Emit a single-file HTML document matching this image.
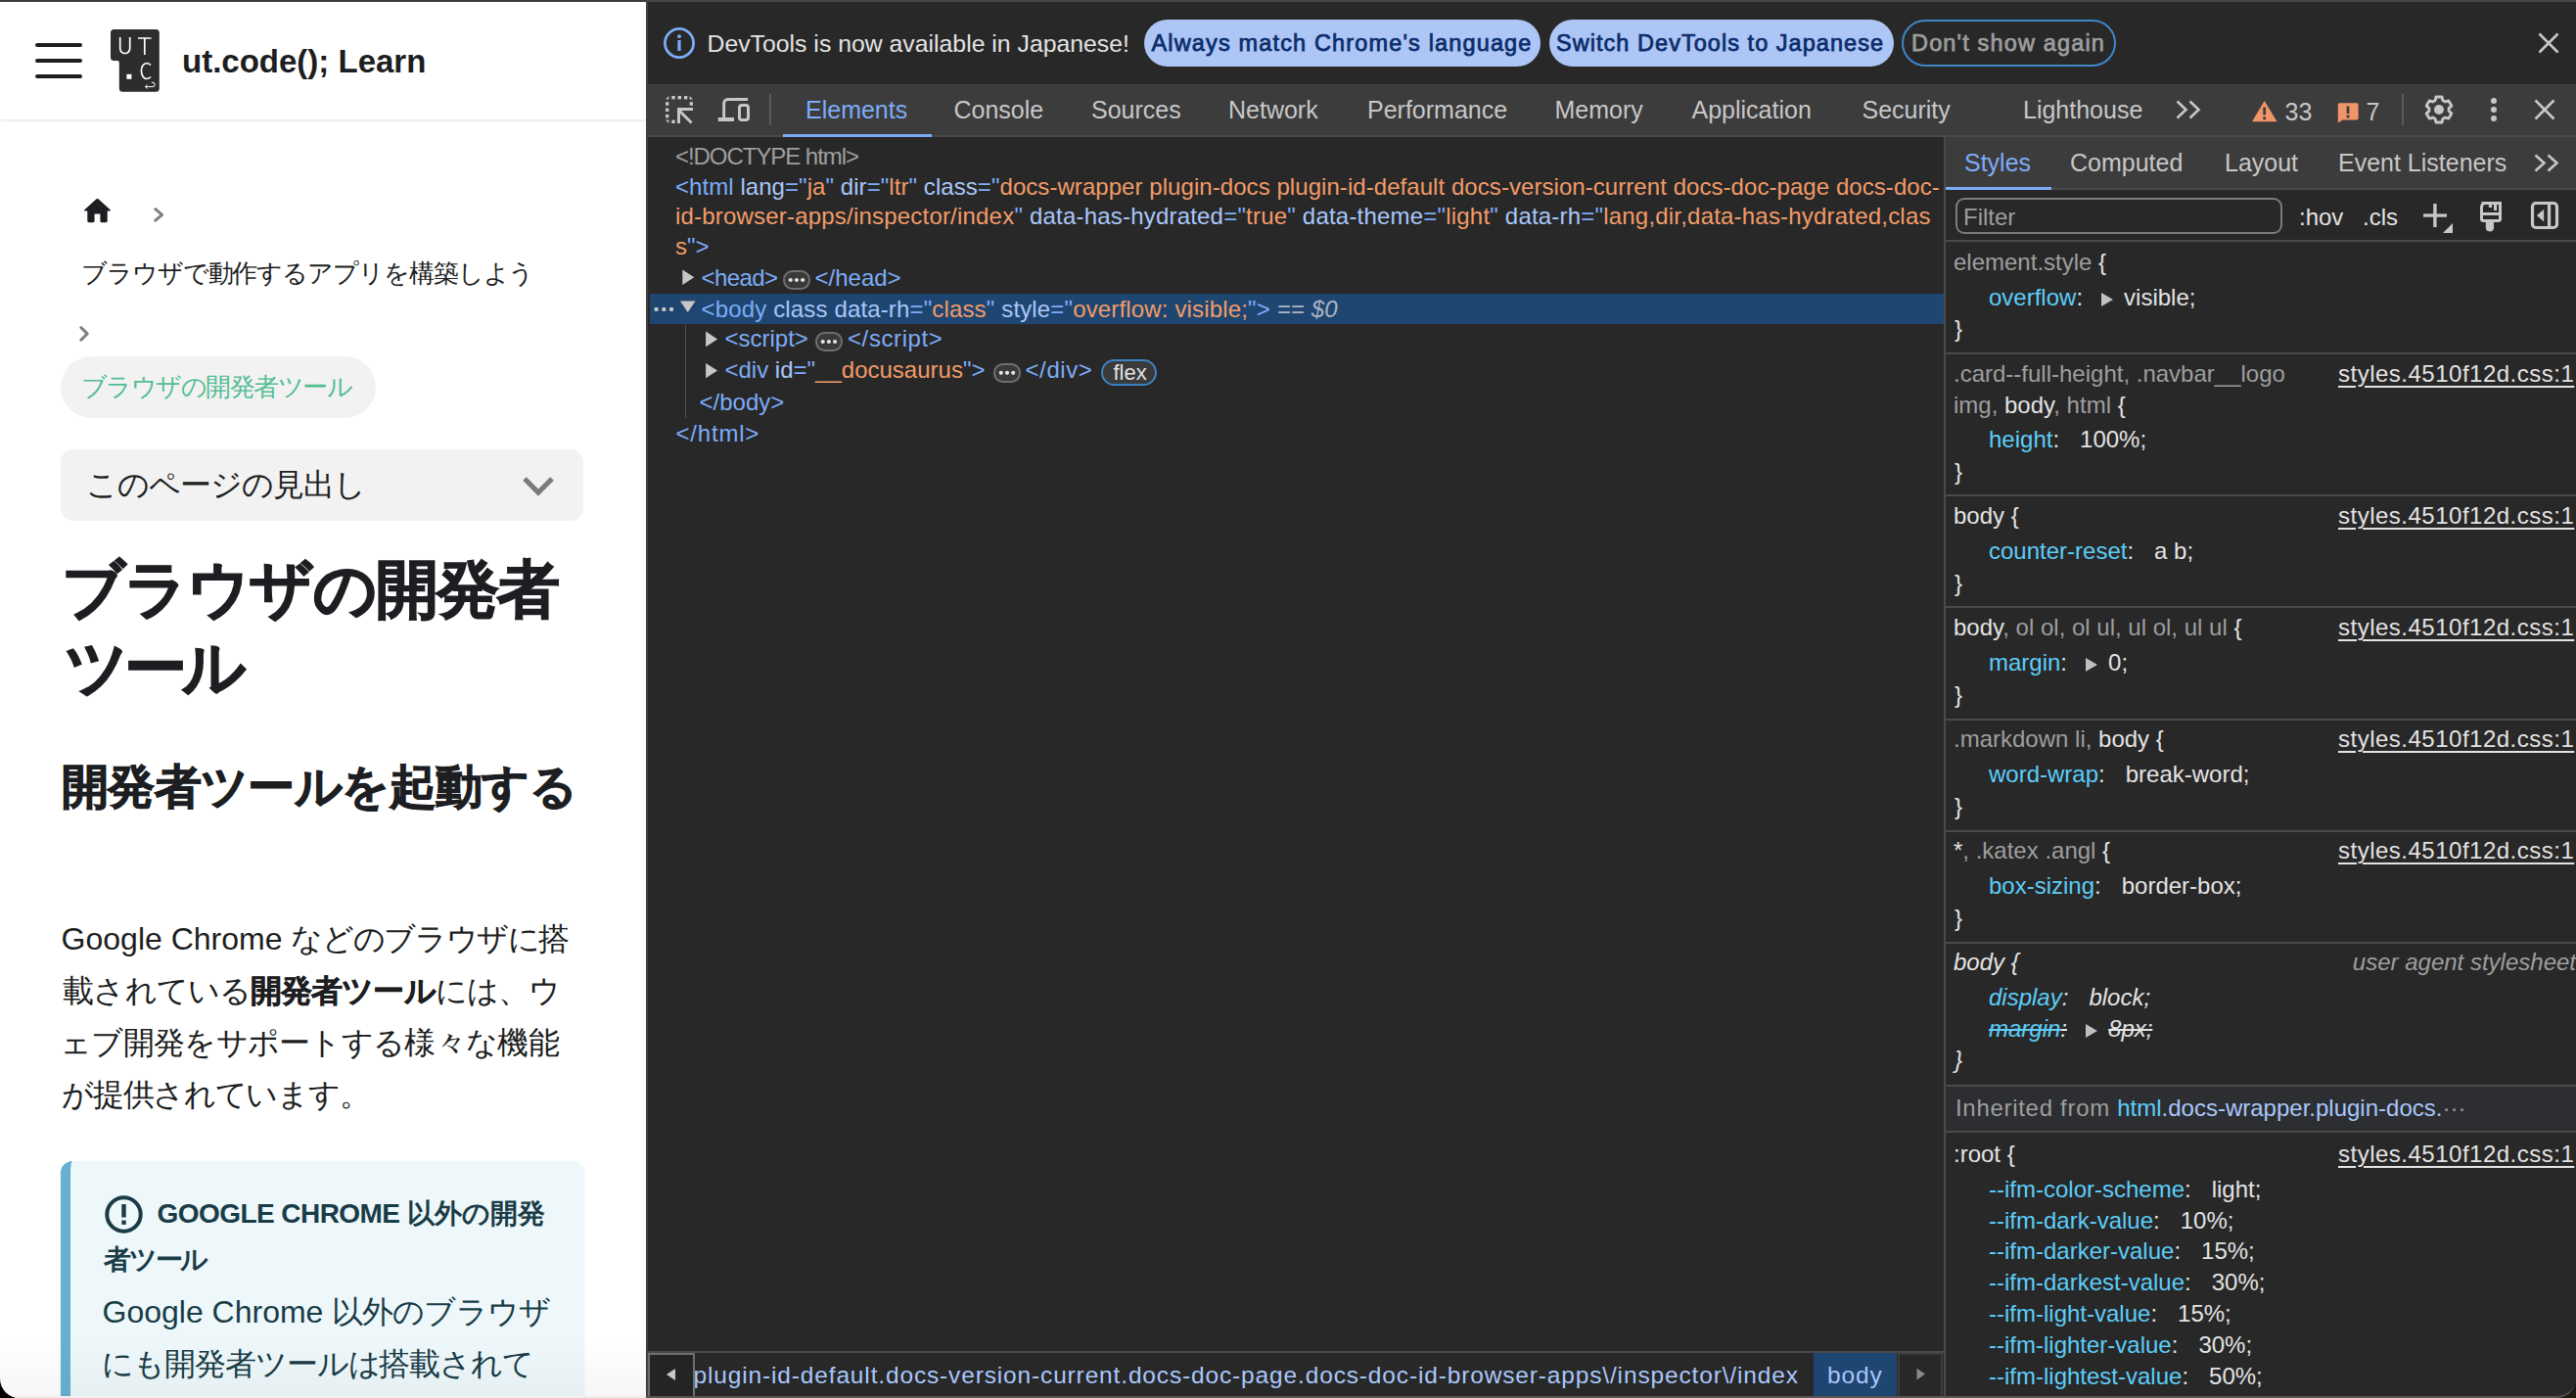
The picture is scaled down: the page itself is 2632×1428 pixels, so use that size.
<!DOCTYPE html><html><head><meta charset="utf-8"><style>
*{box-sizing:border-box;margin:0;padding:0}
html,body{width:2632px;height:1428px;overflow:hidden;background:linear-gradient(to right,#000 50%,#1f1b12 50%)}
body{position:relative;font-family:"Liberation Sans",sans-serif}
#win{position:absolute;left:0;top:0;width:2632px;height:1428px;border-radius:0 0 20px 20px;overflow:hidden;background:#282828}
.t{position:absolute;white-space:nowrap}
.r{position:absolute}
svg{position:absolute;overflow:visible}
.u{text-decoration:underline;text-underline-offset:3px;text-decoration-thickness:2px}
</style></head><body><div id="win">
<div class="r" style="left:0;top:0;width:660px;height:1428px;background:#fff;overflow:hidden">
<div class="r" style="left:0;top:0;width:660px;height:122px;background:#fff;box-shadow:0 1px 3px rgba(0,0,0,.13);z-index:2">
<div class="r" style="left:36px;top:44px;width:48px;height:4px;background:#1c1e21;border-radius:2px"></div>
<div class="r" style="left:36px;top:60px;width:48px;height:4px;background:#1c1e21;border-radius:2px"></div>
<div class="r" style="left:36px;top:76px;width:48px;height:4px;background:#1c1e21;border-radius:2px"></div>
<svg style="left:112px;top:29px" width="53" height="67" viewBox="0 0 53 67">
<path d="M4.5 1H47.3a3.5 3.5 0 0 1 3.5 3.5V61.2a3.5 3.5 0 0 1-3.5 3.5H13.3a3.5 3.5 0 0 1-3.5-3.5V35a2 2 0 0 0-2-2H4.5a3.5 3.5 0 0 1-3.5-3.5V4.5a3.5 3.5 0 0 1 3.5-3.5z" fill="#2d2d2d"/>
<path d="M10.7 9v11.5a5 5 0 0 0 10 0V9" stroke="#fff" stroke-width="1.7" fill="none"/>
<path d="M29 10h13.5M35.8 10v17" stroke="#fff" stroke-width="1.7" fill="none"/>
<path d="M42 37.5a6 6 0 0 0-4-2a5.6 8 0 0 0 0 16a6 6 0 0 0 4-2" stroke="#fff" stroke-width="1.7" fill="none"/>
<rect x="17.4" y="46.8" width="5" height="5" fill="#fff"/>
<path d="M36.5 59.6H44a2.2 2.2 0 0 0 0-4.4H42.8M38.6 57.7L36.5 59.6L38.6 61.5" stroke="#fff" stroke-width="1" fill="none"/>
</svg>
<div class="t " style="left:186.0px;top:46.1px;font-size:33px;line-height:33px;color:#1c1e21;font-weight:700;">ut.code(); Learn</div>
</div>
<svg style="left:81.9px;top:198.1px" width="35" height="35" viewBox="0 0 24 24"><path fill="#1c1e21" d="M10 19v-5h4v5c0 .55.45 1 1 1h3c.55 0 1-.45 1-1v-7h1.7c.46 0 .68-.57.33-.87L12.67 3.6c-.38-.34-.96-.34-1.34 0l-8.36 7.53c-.34.3-.13.87.33.87H5v7c0 .55.45 1 1 1h3c.55 0 1-.45 1-1z"/></svg>
<svg style="left:0;top:0" width="1" height="1"><path d="M158.8 213.6L165.6 219.39999999999998L158.8 225.2" stroke="#808080" stroke-width="3" fill="none" stroke-linecap="round" stroke-linejoin="round"/></svg>
<div class="t" style="left:83.0px;top:267.0px;font-size:25.6px;line-height:25.6px;color:#1c1e21;font-weight:400;letter-spacing:-1.09px">ブラウザで動作するアプリを構築しよう</div>
<svg style="left:0;top:0" width="1" height="1"><path d="M82.8 334.6L89.2 340.9L82.8 347.2" stroke="#808080" stroke-width="3" fill="none" stroke-linecap="round" stroke-linejoin="round"/></svg>
<div class="r" style="left:62px;top:364px;width:322px;height:63px;background:#f2f2f2;border-radius:32px"></div>
<div class="t" style="left:83.0px;top:382.5px;font-size:25.6px;line-height:25.6px;color:#52bd95;font-weight:400;letter-spacing:-1.55px">ブラウザの開発者ツール</div>
<div class="r" style="left:62px;top:459px;width:534px;height:73px;background:#f2f2f2;border-radius:13px"></div>
<div class="t" style="left:88.0px;top:479.0px;font-size:32px;line-height:32px;color:#1c1e21;font-weight:400;letter-spacing:-0.94px">このページの見出し</div>
<svg style="left:0;top:0" width="1" height="1"><path d="M536 489L550 503L564 489" stroke="#7b7b7b" stroke-width="5.2" fill="none" stroke-linejoin="miter"/></svg>
<div class="t" style="left:63.0px;top:562.2px;font-size:64px;line-height:80px;color:#1c1e21;font-weight:700;letter-spacing:-1.86px;-webkit-text-stroke:1.3px #1c1e21">ブラウザの開発者</div>
<div class="t" style="left:66.0px;top:642.0px;font-size:64px;line-height:80px;color:#1c1e21;font-weight:700;letter-spacing:-5.25px;-webkit-text-stroke:1.3px #1c1e21">ツ<span style="letter-spacing:-5px">ール</span></div>
<div class="t" style="left:63.0px;top:774.0px;font-size:48px;line-height:60px;color:#1c1e21;font-weight:700;letter-spacing:-0.64px;-webkit-text-stroke:1px #1c1e21">開発者ツールを起動する</div>
<div class="t" style="left:62.6px;top:933.2px;font-size:32px;line-height:52.8px;color:#1c1e21;font-weight:400;">Google Chrome <span style="letter-spacing:-1.36px">などのブラウザに搭</span></div>
<div class="t" style="left:64.3px;top:986.0px;font-size:32px;line-height:52.8px;color:#1c1e21;font-weight:400;"><span style="letter-spacing:-0.89px">載されている</span><b style="-webkit-text-stroke:0.5px #1c1e21"><span style="letter-spacing:-0.89px">開発者ツール</span></b><span style="letter-spacing:-0.89px">には、ウ</span></div>
<div class="t" style="left:61.0px;top:1038.8px;font-size:32px;line-height:52.8px;color:#1c1e21;font-weight:400;"><span style="letter-spacing:-0.7px">ェブ開発をサポートする様々な機能</span></div>
<div class="t" style="left:63.3px;top:1091.6px;font-size:32px;line-height:52.8px;color:#1c1e21;font-weight:400;"><span style="letter-spacing:-1.3px">が提供されています。</span></div>
<div class="r" style="left:62px;top:1186px;width:535px;height:400px;background:#eef8fb;border-radius:12px;border-left:10px solid #68b0d2;box-shadow:0 1px 2px rgba(0,0,0,.1)"></div>
<svg style="left:107px;top:1221px" width="39" height="39" viewBox="0 0 39 39"><circle cx="19.5" cy="19.5" r="17.2" stroke="#193c47" stroke-width="4" fill="none"/><rect x="17.3" y="9" width="4.4" height="13.5" fill="#193c47"/><rect x="17.3" y="25.5" width="4.4" height="4.4" fill="#193c47"/></svg>
<div class="t" style="left:160.5px;top:1217.4px;font-size:28px;line-height:46px;color:#193c47;font-weight:700;"><span style="letter-spacing:-0.55px">GOOGLE CHROME</span> 以外の開発</div>
<div class="t" style="left:106.0px;top:1263.8px;font-size:28px;line-height:46px;color:#193c47;font-weight:700;letter-spacing:-2.2px">者ツール</div>
<div class="t" style="left:104.5px;top:1313.5px;font-size:32px;line-height:53px;color:#193c47;font-weight:400;">Google Chrome <span style="letter-spacing:-0.93px">以外のブラウザ</span></div>
<div class="t" style="left:104.4px;top:1366.5px;font-size:32px;line-height:53px;color:#193c47;font-weight:400;"><span style="letter-spacing:-1.1px">にも開発者ツールは搭載されて</span></div>
<div class="r" style="left:0;top:1366px;width:660px;height:62px;background:linear-gradient(to bottom,rgba(0,0,0,0),rgba(0,0,0,.035));z-index:3"></div>
</div>
<div class="r" style="left:660px;top:0px;width:2px;height:1428px;background:#414141;"></div>
<div class="r" style="left:662px;top:0px;width:1970px;height:86px;background:#282828;"></div>
<svg style="left:676px;top:26px" width="36" height="36" viewBox="0 0 36 36"><circle cx="18" cy="18" r="14.6" stroke="#7cacf8" stroke-width="2.8" fill="none"/><rect x="16.4" y="15" width="3.2" height="11" fill="#7cacf8"/><circle cx="18" cy="11.2" r="1.9" fill="#7cacf8"/></svg>
<div class="t " style="left:722.5px;top:32.5px;font-size:24.8px;line-height:24.8px;color:#e3e3e3;font-weight:400;">DevTools is now available in Japanese!</div>
<div class="r" style="left:1169px;top:20px;width:405px;height:48px;background:#adc6f6;border-radius:24px"></div>
<div class="t " style="left:1176.5px;top:32.7px;font-size:23.5px;line-height:23.5px;color:#0b2d6b;font-weight:400;letter-spacing:1.15px;-webkit-text-stroke:0.75px currentColor">Always match Chrome's language</div>
<div class="r" style="left:1583px;top:20px;width:352px;height:48px;background:#adc6f6;border-radius:24px"></div>
<div class="t " style="left:1590.0px;top:32.7px;font-size:23.5px;line-height:23.5px;color:#0b2d6b;font-weight:400;letter-spacing:1.04px;-webkit-text-stroke:0.75px currentColor">Switch DevTools to Japanese</div>
<div class="r" style="left:1943px;top:20px;width:219px;height:48px;background:transparent;border-radius:24px;border:2px solid #3f86c9"></div>
<div class="t " style="left:1953.0px;top:32.7px;font-size:23.5px;line-height:23.5px;color:#9d9d9d;font-weight:400;letter-spacing:1.16px;-webkit-text-stroke:0.75px currentColor">Don't show again</div>
<svg style="left:0;top:0" width="1" height="1"><path d="M2594.5 34.5L2613.5 53.5M2613.5 34.5L2594.5 53.5" stroke="#c7c7c7" stroke-width="2.6"/></svg>
<div class="r" style="left:662px;top:86px;width:1970px;height:52px;background:#3c3c3c;"></div>
<div class="r" style="left:662px;top:138px;width:1970px;height:2px;background:#4a4a4a;"></div>
<svg style="left:678px;top:96px" width="32" height="32" viewBox="0 0 32 32" fill="#c7c7c7">
<path d="M2 5.4L5.4 2V5.4z"/><rect x="8.3" y="2" width="3.4" height="3.4"/><rect x="14.6" y="2" width="3.4" height="3.4"/><rect x="20.9" y="2" width="3.4" height="3.4"/><path d="M26.6 2L30 5.4H26.6z"/>
<rect x="2" y="8.3" width="3.4" height="3.4"/><rect x="2" y="14.6" width="3.4" height="3.4"/><rect x="2" y="20.9" width="3.4" height="3.4"/><path d="M2 26.6H5.4V30z"/>
<rect x="8.3" y="26.6" width="3.4" height="3.4"/><rect x="26.6" y="8.3" width="3.4" height="3.4"/>
<path d="M14 14h16v3H17v13h-3z"/><path d="M16 14.8l13.6 13.6-2.1 2.1L13.9 16.9z"/>
</svg>
<svg style="left:0;top:0" width="1" height="1" fill="none" stroke="#c7c7c7" stroke-width="3">
<path d="M739.65 121V105.5a3.9 3.9 0 0 1 3.9-3.9H764.1"/><rect x="733.8" y="120" width="16.2" height="4" fill="#c7c7c7" stroke="none"/><rect x="755.5" y="107.5" width="9" height="15" rx="2.6"/>
</svg>
<div class="r" style="left:786px;top:96px;width:2px;height:32px;background:#5a5a5a;"></div>
<div class="t " style="left:823.0px;top:99.8px;font-size:25px;line-height:25px;color:#7cacf8;font-weight:400;">Elements</div>
<div class="t " style="left:974.5px;top:99.8px;font-size:25px;line-height:25px;color:#c7c7c7;font-weight:400;">Console</div>
<div class="t " style="left:1115.0px;top:99.8px;font-size:25px;line-height:25px;color:#c7c7c7;font-weight:400;">Sources</div>
<div class="t " style="left:1255.0px;top:99.8px;font-size:25px;line-height:25px;color:#c7c7c7;font-weight:400;">Network</div>
<div class="t " style="left:1397.0px;top:99.8px;font-size:25px;line-height:25px;color:#c7c7c7;font-weight:400;">Performance</div>
<div class="t " style="left:1588.5px;top:99.8px;font-size:25px;line-height:25px;color:#c7c7c7;font-weight:400;">Memory</div>
<div class="t " style="left:1728.5px;top:99.8px;font-size:25px;line-height:25px;color:#c7c7c7;font-weight:400;">Application</div>
<div class="t " style="left:1902.5px;top:99.8px;font-size:25px;line-height:25px;color:#c7c7c7;font-weight:400;">Security</div>
<div class="t " style="left:2067.0px;top:99.8px;font-size:25px;line-height:25px;color:#c7c7c7;font-weight:400;">Lighthouse</div>
<div class="r" style="left:800px;top:137px;width:152px;height:3px;background:#7cacf8;"></div>
<svg style="left:0;top:0" width="1" height="1"><path d="M2224.5 103.5L2233.5 112L2224.5 120.5M2237.5 103.5L2246.5 112L2237.5 120.5" stroke="#c7c7c7" stroke-width="2.6" fill="none"/></svg>
<svg style="left:0;top:0" width="1" height="1"><path d="M2313.7 103L2326.5 124.2H2301z" fill="#f0956a"/><rect x="2312.3" y="109.5" width="2.8" height="8" fill="#3c3c3c"/><rect x="2312.3" y="119.4" width="2.8" height="2.8" fill="#3c3c3c"/></svg>
<div class="t " style="left:2334.5px;top:101.6px;font-size:25px;line-height:25px;color:#c7c7c7;font-weight:400;">33</div>
<svg style="left:0;top:0" width="1" height="1"><path d="M2390 105.2h18a1.6 1.6 0 0 1 1.6 1.6v14a1.6 1.6 0 0 1-1.6 1.6h-14.4l-4.8 3.2v-18.8a1.6 1.6 0 0 1 1.2-1.6z" fill="#f0956a"/><rect x="2397.6" y="108.5" width="2.8" height="7.6" fill="#3c3c3c"/><rect x="2397.6" y="117.6" width="2.8" height="2.8" fill="#3c3c3c"/></svg>
<div class="t " style="left:2417.5px;top:101.6px;font-size:25px;line-height:25px;color:#c7c7c7;font-weight:400;">7</div>
<div class="r" style="left:2454px;top:96px;width:2px;height:32px;background:#5a5a5a;"></div>
<svg style="left:0;top:0" width="1" height="1"><path d="M2488.18 102.54L2488.99 98.94L2495.01 98.94L2495.82 102.54L2498.28 103.96L2501.80 102.86L2504.81 108.08L2502.10 110.58L2502.10 113.42L2504.81 115.92L2501.80 121.14L2498.28 120.04L2495.82 121.46L2495.01 125.06L2488.99 125.06L2488.18 121.46L2485.72 120.04L2482.20 121.14L2479.19 115.92L2481.90 113.42L2481.90 110.58L2479.19 108.08L2482.20 102.86L2485.72 103.96z" fill="none" stroke="#c7c7c7" stroke-width="2.9" stroke-linejoin="round"/><circle cx="2492" cy="112" r="5" fill="#c7c7c7"/></svg>
<svg style="left:0;top:0" width="1" height="1"><circle cx="2548" cy="103" r="3" fill="#c7c7c7"/></svg>
<svg style="left:0;top:0" width="1" height="1"><circle cx="2548" cy="112" r="3" fill="#c7c7c7"/></svg>
<svg style="left:0;top:0" width="1" height="1"><circle cx="2548" cy="121" r="3" fill="#c7c7c7"/></svg>
<svg style="left:0;top:0" width="1" height="1"><path d="M2590.5 102.5L2609.5 121.5M2609.5 102.5L2590.5 121.5" stroke="#c7c7c7" stroke-width="2.6"/></svg>
<div class="t " style="left:690.0px;top:147.6px;font-size:24px;line-height:24px;color:#9e9e9e;font-weight:400;letter-spacing:-1.05px">&lt;!DOCTYPE html&gt;</div>
<div class="t " style="left:690.0px;top:179.2px;font-size:24px;line-height:24px;color:#7cacf8;font-weight:400;letter-spacing:0.06px"><span style="color:#7cacf8">&lt;html</span><span style="color:#a8c7fa"> lang</span><span style="color:#7cacf8">="</span><span style="color:#f29b68">ja</span><span style="color:#7cacf8">"</span><span style="color:#a8c7fa"> dir</span><span style="color:#7cacf8">="</span><span style="color:#f29b68">ltr</span><span style="color:#7cacf8">"</span><span style="color:#a8c7fa"> class</span><span style="color:#7cacf8">="</span><span style="color:#f29b68">docs-wrapper plugin-docs plugin-id-default docs-version-current docs-doc-page docs-doc-</span></div>
<div class="t " style="left:690.0px;top:209.4px;font-size:24px;line-height:24px;color:#7cacf8;font-weight:400;letter-spacing:0.2px"><span style="color:#f29b68">id-browser-apps/inspector/index</span><span style="color:#7cacf8">"</span><span style="color:#a8c7fa"> data-has-hydrated</span><span style="color:#7cacf8">="</span><span style="color:#f29b68">true</span><span style="color:#7cacf8">"</span><span style="color:#a8c7fa"> data-theme</span><span style="color:#7cacf8">="</span><span style="color:#f29b68">light</span><span style="color:#7cacf8">"</span><span style="color:#a8c7fa"> data-rh</span><span style="color:#7cacf8">="</span><span style="color:#f29b68">lang,dir,data-has-hydrated,clas</span></div>
<div class="t " style="left:690.0px;top:239.7px;font-size:24px;line-height:24px;color:#7cacf8;font-weight:400;"><span style="color:#f29b68">s</span><span style="color:#7cacf8">"&gt;</span></div>
<svg style="left:0;top:0" width="1" height="1"><path d="M697.3 275.5L709.3 283.25L697.3 291z" fill="#c7c7c7"/></svg>
<div class="t " style="left:716.5px;top:271.9px;font-size:24px;line-height:24px;color:#7cacf8;font-weight:400;letter-spacing:-0.6px">&lt;head&gt;</div>
<div class="r" style="left:800.2px;top:276.3px;width:27.5px;height:19.399999999999977px;border:2px solid #6f6f6f;background:#3a3a3a;border-radius:9.699999999999989px"></div>
<svg style="left:0;top:0" width="1" height="1"><circle cx="807.75" cy="286.0" r="2.1" fill="#e3e3e3"/><circle cx="813.95" cy="286.0" r="2.1" fill="#e3e3e3"/><circle cx="820.1500000000001" cy="286.0" r="2.1" fill="#e3e3e3"/></svg>
<div class="t " style="left:832.5px;top:271.9px;font-size:24px;line-height:24px;color:#7cacf8;font-weight:400;">&lt;/head&gt;</div>
<div class="r" style="left:664px;top:300px;width:1322px;height:31px;background:#1f4670;"></div>
<svg style="left:0;top:0" width="1" height="1"><circle cx="670.6" cy="315.9" r="2.2" fill="#c7c7c7"/><circle cx="678.3" cy="315.9" r="2.2" fill="#c7c7c7"/><circle cx="686" cy="315.9" r="2.2" fill="#c7c7c7"/><path d="M695 307.5H710.5L702.75 319z" fill="#c7c7c7"/></svg>
<div class="t " style="left:716.5px;top:304.1px;font-size:24px;line-height:24px;color:#7cacf8;font-weight:400;letter-spacing:0.15px"><span style="color:#7cacf8">&lt;body</span><span style="color:#a8c7fa"> class</span><span style="color:#a8c7fa"> data-rh</span><span style="color:#7cacf8">="</span><span style="color:#f29b68">class</span><span style="color:#7cacf8">"</span><span style="color:#a8c7fa"> style</span><span style="color:#7cacf8">="</span><span style="color:#f29b68">overflow: visible;</span><span style="color:#7cacf8">"</span><span style="color:#7cacf8">&gt;</span><span style="color:#a9b4c4;font-style:italic"> == $0</span></div>
<div class="r" style="left:700px;top:331px;width:1px;height:96px;background:#4d4d4d;"></div>
<svg style="left:0;top:0" width="1" height="1"><path d="M721.1 338.6L733.1 346.4L721.1 354.2z" fill="#c7c7c7"/></svg>
<div class="t " style="left:740.5px;top:334.3px;font-size:24px;line-height:24px;color:#7cacf8;font-weight:400;">&lt;script&gt;</div>
<div class="r" style="left:832.9px;top:339.3px;width:28.0px;height:19.399999999999977px;border:2px solid #6f6f6f;background:#3a3a3a;border-radius:9.699999999999989px"></div>
<svg style="left:0;top:0" width="1" height="1"><circle cx="840.6999999999999" cy="349.0" r="2.1" fill="#e3e3e3"/><circle cx="846.9" cy="349.0" r="2.1" fill="#e3e3e3"/><circle cx="853.1" cy="349.0" r="2.1" fill="#e3e3e3"/></svg>
<div class="t " style="left:866.0px;top:334.3px;font-size:24px;line-height:24px;color:#7cacf8;font-weight:400;letter-spacing:0.6px">&lt;/script&gt;</div>
<svg style="left:0;top:0" width="1" height="1"><path d="M721.1 370.9L733.1 378.6L721.1 386.3z" fill="#c7c7c7"/></svg>
<div class="t " style="left:740.5px;top:366.4px;font-size:24px;line-height:24px;color:#7cacf8;font-weight:400;"><span style="color:#7cacf8">&lt;div</span><span style="color:#a8c7fa"> id</span><span style="color:#7cacf8">="</span><span style="color:#f29b68">__docusaurus</span><span style="color:#7cacf8">"</span><span style="color:#7cacf8">&gt;</span></div>
<div class="r" style="left:1015px;top:371.1px;width:28px;height:19.5px;border:2px solid #6f6f6f;background:#3a3a3a;border-radius:9.75px"></div>
<svg style="left:0;top:0" width="1" height="1"><circle cx="1022.8" cy="380.85" r="2.1" fill="#e3e3e3"/><circle cx="1029.0" cy="380.85" r="2.1" fill="#e3e3e3"/><circle cx="1035.2" cy="380.85" r="2.1" fill="#e3e3e3"/></svg>
<div class="t " style="left:1047.5px;top:366.4px;font-size:24px;line-height:24px;color:#7cacf8;font-weight:400;letter-spacing:0.6px">&lt;/div&gt;</div>
<div class="r" style="left:1124.8px;top:367.3px;width:57.2px;height:27.1px;border:2.4px solid #3d84c6;background:#3a3a3a;border-radius:14px"></div>
<div class="t " style="left:1137.5px;top:369.6px;font-size:22px;line-height:22px;color:#e3e3e3;font-weight:400;">flex</div>
<div class="t " style="left:714.5px;top:398.5px;font-size:24px;line-height:24px;color:#7cacf8;font-weight:400;">&lt;/body&gt;</div>
<div class="t " style="left:690.5px;top:430.6px;font-size:24px;line-height:24px;color:#7cacf8;font-weight:400;letter-spacing:0.8px">&lt;/html&gt;</div>
<div class="r" style="left:662px;top:1380px;width:1324px;height:2px;background:#4a4a4a;"></div>
<div class="r" style="left:662px;top:1382px;width:1324px;height:46px;background:#282828;overflow:hidden">
<div class="t " style="left:46.5px;top:10.9px;font-size:24.5px;line-height:24.5px;color:#a8c7fa;font-weight:400;letter-spacing:0.85px">plugin-id-default.docs-version-current.docs-doc-page.docs-doc-id-browser-apps\/inspector\/index</div>
</div>
<div class="r" style="left:662px;top:1382px;width:47.6px;height:46px;background:#282828;border:2px solid #6e6e6e;border-bottom:0;background:#242424"></div>
<svg style="left:0;top:0" width="1" height="1"><path d="M690 1398L681 1404L690 1410z" fill="#c7c7c7"/></svg>
<div class="r" style="left:1853px;top:1382px;width:85px;height:46px;background:#1f4670;"></div>
<div class="t " style="left:1867.0px;top:1392.9px;font-size:24.5px;line-height:24.5px;color:#a8c7fa;font-weight:400;letter-spacing:0.85px">body</div>
<div class="r" style="left:1939px;top:1382px;width:46px;height:46px;background:#282828;border:2px solid #3c3c3c;border-bottom:0"></div>
<svg style="left:0;top:0" width="1" height="1"><path d="M1958.5 1397.8L1967 1403.6L1958.5 1409.5z" fill="#8a8a8a"/></svg>
<div class="r" style="left:1986px;top:140px;width:2px;height:1288px;background:#4a4a4a;"></div>
<div class="r" style="left:1988px;top:140px;width:644px;height:52px;background:#3c3c3c;"></div>
<div class="r" style="left:1988px;top:192px;width:644px;height:2px;background:#4a4a4a;"></div>
<div class="r" style="left:1988px;top:191px;width:108px;height:3px;background:#7cacf8;"></div>
<div class="t " style="left:2007.0px;top:153.6px;font-size:25px;line-height:25px;color:#7cacf8;font-weight:400;">Styles</div>
<div class="t " style="left:2115.0px;top:153.6px;font-size:25px;line-height:25px;color:#c7c7c7;font-weight:400;">Computed</div>
<div class="t " style="left:2273.0px;top:153.6px;font-size:25px;line-height:25px;color:#c7c7c7;font-weight:400;">Layout</div>
<div class="t " style="left:2389.0px;top:153.6px;font-size:25px;line-height:25px;color:#c7c7c7;font-weight:400;">Event Listeners</div>
<svg style="left:0;top:0" width="1" height="1"><path d="M2590.5 158.5L2599.5 166.5L2590.5 174.5M2603.5 158.5L2612.5 166.5L2603.5 174.5" stroke="#c7c7c7" stroke-width="2.6" fill="none"/></svg>
<div class="r" style="left:1988px;top:194px;width:644px;height:51px;background:#282828;"></div>
<div class="r" style="left:1988px;top:245px;width:644px;height:2px;background:#4a4a4a;"></div>
<div class="r" style="left:1998px;top:202px;width:334px;height:37px;border:2px solid #7c7c7c;border-radius:9px"></div>
<div class="t " style="left:2006.0px;top:209.7px;font-size:24px;line-height:24px;color:#9e9e9e;font-weight:400;">Filter</div>
<div class="t " style="left:2349.0px;top:209.7px;font-size:24px;line-height:24px;color:#e3e3e3;font-weight:400;">:hov</div>
<div class="t " style="left:2414.0px;top:209.7px;font-size:24px;line-height:24px;color:#e3e3e3;font-weight:400;">.cls</div>
<svg style="left:0;top:0" width="1" height="1" fill="#c7c7c7">
<rect x="2476" y="218.4" width="24" height="3.3"/><rect x="2486.2" y="208" width="3.4" height="24"/>
<path d="M2496 238.1H2506V228z"/>
<path d="M2535.5 207.5h19v16.5a1.5 1.5 0 0 1-1.5 1.5h-16a1.5 1.5 0 0 1-1.5-1.5v-12.5a4 4 0 0 1 4-4z" fill="none" stroke="#c7c7c7" stroke-width="3"/>
<rect x="2535" y="217" width="19" height="3"/>
<rect x="2542.8" y="207" width="3.3" height="5"/><rect x="2548" y="207" width="3.1" height="8"/>
<path d="M2539.8 225h8.2v7.5a4.1 4.1 0 0 1-8.2 0z"/>
<rect x="2587.5" y="207.5" width="25" height="25" rx="3.5" fill="none" stroke="#c7c7c7" stroke-width="3.2"/>
<rect x="2602.9" y="207" width="3.3" height="26"/>
<path d="M2591.9 220L2599.2 213.7V226.4z"/>
</svg>
<div class="t " style="left:1996.0px;top:255.5px;font-size:24px;line-height:24px;color:#e3e3e3;font-weight:400;"><span style="color:#9e9e9e">element.style</span><span style="color:#e3e3e3"> {</span></div>
<div class="t " style="left:2032.0px;top:291.6px;font-size:24px;line-height:24px;color:#e3e3e3;font-weight:400;"><span style="color:#5ccdf8;">overflow</span><span style="">:</span><span style="display:inline-block;width:0;height:0;margin-left:19px;margin-right:11px;border-left:12px solid #c0c0c0;border-top:7.7px solid transparent;border-bottom:7.7px solid transparent;vertical-align:-1px"></span><span style="">visible;</span></div>
<div class="t " style="left:1997.0px;top:324.2px;font-size:24px;line-height:24px;color:#e3e3e3;font-weight:400;">}</div>
<div class="r" style="left:1988px;top:360px;width:644px;height:2px;background:#4a4a4a;"></div>
<div class="t " style="left:1996.0px;top:369.5px;font-size:24px;line-height:24px;color:#e3e3e3;font-weight:400;"><span style="color:#9e9e9e">.card--full-height, .navbar__logo</span></div>
<div class="t " style="left:1996.0px;top:401.7px;font-size:24px;line-height:24px;color:#e3e3e3;font-weight:400;"><span style="color:#9e9e9e">img, </span><span style="color:#e3e3e3">body</span><span style="color:#9e9e9e">, html</span><span style="color:#e3e3e3"> {</span></div>
<div class="t" style="left:2389px;top:369.5px;font-size:24px;line-height:24px;color:#e3e3e3;text-decoration:underline;text-underline-offset:4px;text-decoration-thickness:2px;letter-spacing:0.5px">styles.4510f12d.css:1</div>
<div class="t " style="left:2032.0px;top:437.1px;font-size:24px;line-height:24px;color:#e3e3e3;font-weight:400;"><span style="color:#5ccdf8;">height</span><span style="">:</span><span style="margin-left:21px;">100%;</span></div>
<div class="t " style="left:1997.0px;top:469.7px;font-size:24px;line-height:24px;color:#e3e3e3;font-weight:400;">}</div>
<div class="r" style="left:1988px;top:505px;width:644px;height:2px;background:#4a4a4a;"></div>
<div class="t " style="left:1996.0px;top:515.3px;font-size:24px;line-height:24px;color:#e3e3e3;font-weight:400;">body {</div>
<div class="t" style="left:2389px;top:515.3px;font-size:24px;line-height:24px;color:#e3e3e3;text-decoration:underline;text-underline-offset:4px;text-decoration-thickness:2px;letter-spacing:0.5px">styles.4510f12d.css:1</div>
<div class="t " style="left:2032.0px;top:550.7px;font-size:24px;line-height:24px;color:#e3e3e3;font-weight:400;"><span style="color:#5ccdf8;">counter-reset</span><span style="">:</span><span style="margin-left:21px;">a b;</span></div>
<div class="t " style="left:1997.0px;top:583.7px;font-size:24px;line-height:24px;color:#e3e3e3;font-weight:400;">}</div>
<div class="r" style="left:1988px;top:619px;width:644px;height:2px;background:#4a4a4a;"></div>
<div class="t " style="left:1996.0px;top:629.4px;font-size:24px;line-height:24px;color:#e3e3e3;font-weight:400;"><span style="color:#e3e3e3">body</span><span style="color:#9e9e9e">, ol ol, ol ul, ul ol, ul ul</span><span style="color:#e3e3e3"> {</span></div>
<div class="t" style="left:2389px;top:629.4px;font-size:24px;line-height:24px;color:#e3e3e3;text-decoration:underline;text-underline-offset:4px;text-decoration-thickness:2px;letter-spacing:0.5px">styles.4510f12d.css:1</div>
<div class="t " style="left:2032.0px;top:665.4px;font-size:24px;line-height:24px;color:#e3e3e3;font-weight:400;"><span style="color:#5ccdf8;">margin</span><span style="">:</span><span style="display:inline-block;width:0;height:0;margin-left:19px;margin-right:11px;border-left:12px solid #c0c0c0;border-top:7.7px solid transparent;border-bottom:7.7px solid transparent;vertical-align:-1px"></span><span style="">0;</span></div>
<div class="t " style="left:1997.0px;top:697.5px;font-size:24px;line-height:24px;color:#e3e3e3;font-weight:400;">}</div>
<div class="r" style="left:1988px;top:733.5px;width:644px;height:2px;background:#4a4a4a;"></div>
<div class="t " style="left:1996.0px;top:743.2px;font-size:24px;line-height:24px;color:#e3e3e3;font-weight:400;"><span style="color:#9e9e9e">.markdown li, </span><span style="color:#e3e3e3">body {</span></div>
<div class="t" style="left:2389px;top:743.2px;font-size:24px;line-height:24px;color:#e3e3e3;text-decoration:underline;text-underline-offset:4px;text-decoration-thickness:2px;letter-spacing:0.5px">styles.4510f12d.css:1</div>
<div class="t " style="left:2032.0px;top:779.2px;font-size:24px;line-height:24px;color:#e3e3e3;font-weight:400;"><span style="color:#5ccdf8;">word-wrap</span><span style="">:</span><span style="margin-left:21px;">break-word;</span></div>
<div class="t " style="left:1997.0px;top:811.7px;font-size:24px;line-height:24px;color:#e3e3e3;font-weight:400;">}</div>
<div class="r" style="left:1988px;top:848px;width:644px;height:2px;background:#4a4a4a;"></div>
<div class="t " style="left:1996.0px;top:857.4px;font-size:24px;line-height:24px;color:#e3e3e3;font-weight:400;"><span style="color:#e3e3e3">*</span><span style="color:#9e9e9e">, .katex .angl</span><span style="color:#e3e3e3"> {</span></div>
<div class="t" style="left:2389px;top:857.4px;font-size:24px;line-height:24px;color:#e3e3e3;text-decoration:underline;text-underline-offset:4px;text-decoration-thickness:2px;letter-spacing:0.5px">styles.4510f12d.css:1</div>
<div class="t " style="left:2032.0px;top:892.7px;font-size:24px;line-height:24px;color:#e3e3e3;font-weight:400;"><span style="color:#5ccdf8;">box-sizing</span><span style="">:</span><span style="margin-left:21px;">border-box;</span></div>
<div class="t " style="left:1997.0px;top:925.7px;font-size:24px;line-height:24px;color:#e3e3e3;font-weight:400;">}</div>
<div class="r" style="left:1988px;top:961.5px;width:644px;height:2px;background:#4a4a4a;"></div>
<div class="t " style="left:1996.0px;top:970.7px;font-size:24px;line-height:24px;color:#e3e3e3;font-weight:400;font-style:italic">body {</div>
<div class="t" style="right:0;top:970.7px;font-size:24px;line-height:24px;color:#9e9e9e;font-style:italic">user agent stylesheet</div>
<div class="t " style="left:2032.0px;top:1006.7px;font-size:24px;line-height:24px;color:#e3e3e3;font-weight:400;font-style:italic"><span style="color:#5ccdf8;">display</span><span style="">:</span><span style="margin-left:21px;">block;</span></div>
<div class="t " style="left:2032.0px;top:1038.7px;font-size:24px;line-height:24px;color:#e3e3e3;font-weight:400;font-style:italic"><span style="color:#5ccdf8;text-decoration:line-through;text-decoration-thickness:2px;">margin</span><span style="text-decoration:line-through;text-decoration-thickness:2px;">:</span><span style="display:inline-block;width:0;height:0;margin-left:19px;margin-right:11px;border-left:12px solid #c0c0c0;border-top:7.7px solid transparent;border-bottom:7.7px solid transparent;vertical-align:-1px"></span><span style="text-decoration:line-through;text-decoration-thickness:2px;">8px;</span></div>
<div class="t " style="left:1997.0px;top:1070.7px;font-size:24px;line-height:24px;color:#e3e3e3;font-weight:400;font-style:italic">}</div>
<div class="r" style="left:1988px;top:1108px;width:644px;height:2px;background:#4a4a4a;"></div>
<div class="r" style="left:1988px;top:1110px;width:644px;height:45px;background:#2d2e31;"></div>
<div class="t " style="left:1998.0px;top:1120.4px;font-size:24px;line-height:24px;color:#e3e3e3;font-weight:400;"><span style="color:#9e9e9e;letter-spacing:0.7px">Inherited from </span><span style="color:#5ccdf8">html</span><span style="color:#a8c7fa">.docs-wrapper.plugin-docs.</span><span style="color:#9e9e9e">···</span></div>
<div class="r" style="left:1988px;top:1155px;width:644px;height:2px;background:#4a4a4a;"></div>
<div class="t " style="left:1996.0px;top:1167.0px;font-size:24px;line-height:24px;color:#e3e3e3;font-weight:400;">:root {</div>
<div class="t" style="left:2389px;top:1167.0px;font-size:24px;line-height:24px;color:#e3e3e3;text-decoration:underline;text-underline-offset:4px;text-decoration-thickness:2px;letter-spacing:0.5px">styles.4510f12d.css:1</div>
<div class="t " style="left:2032.0px;top:1202.7px;font-size:24px;line-height:24px;color:#e3e3e3;font-weight:400;"><span style="color:#5ccdf8;">--ifm-color-scheme</span><span style="">:</span><span style="margin-left:21px;">light;</span></div>
<div class="t " style="left:2032.0px;top:1234.6px;font-size:24px;line-height:24px;color:#e3e3e3;font-weight:400;"><span style="color:#5ccdf8;">--ifm-dark-value</span><span style="">:</span><span style="margin-left:21px;">10%;</span></div>
<div class="t " style="left:2032.0px;top:1266.4px;font-size:24px;line-height:24px;color:#e3e3e3;font-weight:400;"><span style="color:#5ccdf8;">--ifm-darker-value</span><span style="">:</span><span style="margin-left:21px;">15%;</span></div>
<div class="t " style="left:2032.0px;top:1298.3px;font-size:24px;line-height:24px;color:#e3e3e3;font-weight:400;"><span style="color:#5ccdf8;">--ifm-darkest-value</span><span style="">:</span><span style="margin-left:21px;">30%;</span></div>
<div class="t " style="left:2032.0px;top:1330.2px;font-size:24px;line-height:24px;color:#e3e3e3;font-weight:400;"><span style="color:#5ccdf8;">--ifm-light-value</span><span style="">:</span><span style="margin-left:21px;">15%;</span></div>
<div class="t " style="left:2032.0px;top:1362.0px;font-size:24px;line-height:24px;color:#e3e3e3;font-weight:400;"><span style="color:#5ccdf8;">--ifm-lighter-value</span><span style="">:</span><span style="margin-left:21px;">30%;</span></div>
<div class="t " style="left:2032.0px;top:1393.9px;font-size:24px;line-height:24px;color:#e3e3e3;font-weight:400;"><span style="color:#5ccdf8;">--ifm-lightest-value</span><span style="">:</span><span style="margin-left:21px;">50%;</span></div>
<div class="r" style="left:0px;top:0px;width:660px;height:2px;background:#3b3d3c;z-index:10"></div>
<div class="r" style="left:660px;top:0px;width:1972px;height:2px;background:#474747;z-index:10"></div>
<div class="r" style="left:0px;top:1426px;width:660px;height:2px;background:#efefef;z-index:10"></div>
<div class="r" style="left:660px;top:1368px;width:1972px;height:60px;border-bottom:2px solid #575757;border-bottom-right-radius:20px;z-index:10;pointer-events:none"></div>
</div></body></html>
